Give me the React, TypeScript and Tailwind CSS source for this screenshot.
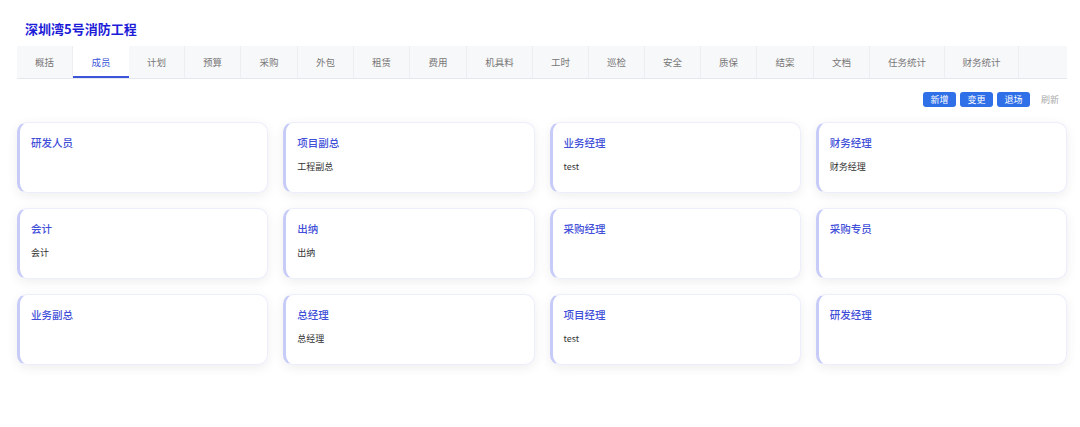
import React from "react";

const tabs = [
  { name: "概括", w: "w-[56px]" },
  { name: "成员", w: "w-[56px]" },
  { name: "计划", w: "w-[56px]" },
  { name: "预算", w: "w-[56px]" },
  { name: "采购", w: "w-[57px]" },
  { name: "外包", w: "w-[56px]" },
  { name: "租赁", w: "w-[56px]" },
  { name: "费用", w: "w-[57px]" },
  { name: "机具料", w: "w-[66px]" },
  { name: "工时", w: "w-[56px]" },
  { name: "巡检", w: "w-[56px]" },
  { name: "安全", w: "w-[56px]" },
  { name: "质保", w: "w-[56px]" },
  { name: "结案", w: "w-[57px]" },
  { name: "文档", w: "w-[56px]" },
  { name: "任务统计", w: "w-[75px]" },
  { name: "财务统计", w: "w-[74px]" },
];

const members = [
  { role: "研发人员", name: "" },
  { role: "项目副总", name: "工程副总" },
  { role: "业务经理", name: "test" },
  { role: "财务经理", name: "财务经理" },
  { role: "会计", name: "会计" },
  { role: "出纳", name: "出纳" },
  { role: "采购经理", name: "" },
  { role: "采购专员", name: "" },
  { role: "业务副总", name: "" },
  { role: "总经理", name: "总经理" },
  { role: "项目经理", name: "test" },
  { role: "研发经理", name: "" },
];

export default function App() {
  const active = "成员";
  return (
    <div className="min-h-[427px] bg-white pl-[17px] pr-[13px] pt-[19px] font-['Noto_Sans_CJK_SC','Noto_Sans',sans-serif]">
      <h1 className="pl-[8px] text-[13px] font-bold leading-[20px] text-[#1c1cd8]">深圳湾5号消防工程</h1>

      <div className="mt-[7px] flex h-[33px] border-b border-[#e4e7ed] bg-[#f7f8fa]">
        {tabs.map((t) => (
          <div
            key={t.name}
            className={
              t.name === active
                ? `${t.w} flex items-center justify-center border-b-2 border-[#3b55d6] bg-white pt-[2px] text-[9.5px] text-[#3b55d6]`
                : `${t.w} flex items-center justify-center border-r border-[#eceef2] text-[9.5px] text-[#777]`
            }
          >
            {t.name}
          </div>
        ))}
        <div className="flex-1" />
      </div>

      <div className="mt-[13px] flex items-center justify-end gap-[4px] pr-[8px]">
        <button className="h-[15px] w-[33px] rounded-[3px] bg-[#2f6fe8] text-[9px] leading-[15px] text-white">新增</button>
        <button className="h-[15px] w-[33px] rounded-[3px] bg-[#2f6fe8] text-[9px] leading-[15px] text-white">变更</button>
        <button className="h-[15px] w-[33px] rounded-[3px] bg-[#2f6fe8] text-[9px] leading-[15px] text-white">退场</button>
        <span className="ml-[7px] text-[9px] text-[#aaa]">刷新</span>
      </div>

      <div className="mt-[15px] grid grid-cols-4 gap-x-[15px] gap-y-[15px]">
        {members.map((m, i) => (
          <div
            key={i}
            className="h-[71px] rounded-[10px] border border-l-[3px] border-[#eceefc] border-l-[#c6cbf7] bg-white px-[11px] pt-[11px] shadow-[0_3px_12px_rgba(0,0,0,0.07)]"
          >
            <div className="text-[10.5px] font-medium leading-[18px] text-[#3f4fd8]">{m.role}</div>
            {m.name && <div className="mt-[8px] text-[9px] leading-[14px] text-[#333]">{m.name}</div>}
          </div>
        ))}
      </div>
    </div>
  );
}
